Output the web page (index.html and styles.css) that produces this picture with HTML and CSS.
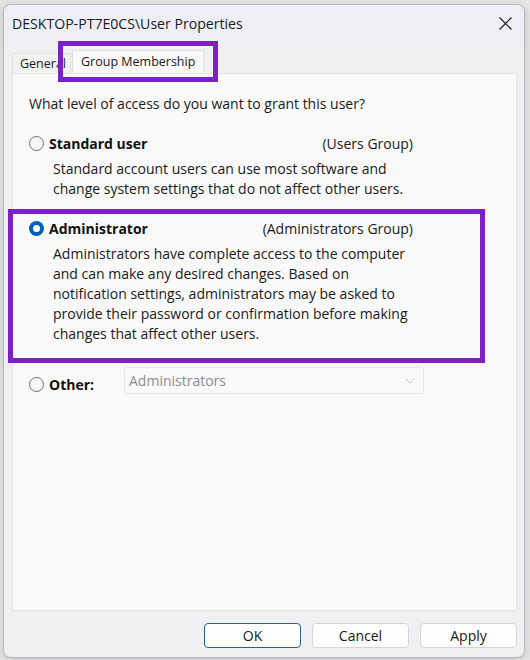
FILE: index.html
```html
<!DOCTYPE html>
<html lang="en">
<head>
<meta charset="utf-8">
<title>User Properties</title>
<link rel="stylesheet" href="styles.css">
</head>
<body>
<div class="window">
  <div class="titlebar">
    <span class="title">DESKTOP-PT7E0CS\User Properties</span>
    <span class="close">
      <svg width="13" height="13" viewBox="0 0 13 13"><path d="M0.5 0.5 L12.5 12.5 M12.5 0.5 L0.5 12.5" stroke="#1b1b1b" stroke-width="1.2" fill="none"/></svg>
    </span>
  </div>
  <div class="tabs">
    <div class="tab">General</div>
    <div class="tab active">Group Membership</div>
  </div>
  <div class="panel">
    <p class="question">What level of access do you want to grant this user?</p>
    <div class="option">
      <div class="option-head">
        <span class="radio"></span>
        <span class="option-name">Standard user</span>
        <span class="group">(Users Group)</span>
      </div>
      <p class="desc">Standard account users can use most software and<br>change system settings that do not affect other users.</p>
    </div>
    <div class="option admin">
      <div class="option-head">
        <span class="radio checked"></span>
        <span class="option-name">Administrator</span>
        <span class="group">(Administrators Group)</span>
      </div>
      <p class="desc">Administrators have complete access to the computer<br>and can make any desired changes. Based on<br>notification settings, administrators may be asked to<br>provide their password or confirmation before making<br>changes that affect other users.</p>
      <div class="mark mark-admin"></div>
    </div>
    <div class="other">
      <span class="radio"></span>
      <span class="option-name other-label">Other:</span>
      <div class="select">
        <span>Administrators</span>
        <svg width="10" height="6" viewBox="0 0 10 6"><path d="M0.5 0.5 L5 5 L9.5 0.5" stroke="#c4c4c4" stroke-width="1" fill="none"/></svg>
      </div>
    </div>
  </div>
  <div class="footer">
    <button class="btn default">OK</button>
    <button class="btn">Cancel</button>
    <button class="btn">Apply</button>
  </div>
  <div class="mark mark-tab"></div>
</div>
</body>
</html>
```
FILE: styles.css
```css
* { box-sizing: border-box; }

html, body {
  margin: 0;
  height: 100%;
}

body {
  background: #e6e6e6;
  padding: 4px 0 0 3px;
  font-family: "Open Sans", "Noto Sans", sans-serif;
  color: #1a1a1a;
  overflow: hidden;
}

.window {
  position: relative;
  width: 522px;
  height: 654px;
  background: #f0f0f3;
  border: 1px solid #b9b9bd;
  border-radius: 8px;
  box-shadow: 0 2px 8px rgba(0,0,0,0.18);
  display: flex;
  flex-direction: column;
}

.titlebar {
  height: 36px;
  display: flex;
  align-items: center;
  justify-content: space-between;
  padding: 0 12px 0 8px;
  background: #eeeff5;
  border-radius: 8px 8px 0 0;
}

.title {
  font-size: 14.1px;
  color: #1a1a1a;
}

.close {
  display: flex;
  width: 13px;
  height: 13px;
}

.tabs {
  display: flex;
  align-items: flex-end;
  height: 32px;
  padding: 0 0 0 8px;
}

.tab {
  font-size: 12.5px;
  height: 20px;
  line-height: 19px;
  padding: 0 4px 0 7px;
  background: #f2f2f2;
  border: 1px solid #e2e2e2;
  border-bottom: none;
  color: #1a1a1a;
}

.tab.active {
  height: 23px;
  line-height: 22px;
  padding: 0 8px;
  background: #f9f9f9;
  margin-left: 1px;
}

.panel {
  height: 538px;
  margin: 0 7px 0 8px;
  background: #f9f9f9;
  border: 1px solid #e4e4e4;
  padding: 20px 0 0 16px;
  font-size: 14px;
}

.question {
  margin: 0;
  line-height: 20px;
}

.option {
  position: relative;
  width: 384px;
  margin-top: 19px;
}

.option.admin {
  margin-top: 19px;
}

.option-head {
  display: flex;
  align-items: center;
  height: 20px;
}

.radio {
  width: 15px;
  height: 15px;
  border-radius: 50%;
  border: 1px solid #6f6f6f;
  background: #f6f6f6;
  flex: none;
}

.radio.checked {
  border: none;
  background: #005fb8;
  position: relative;
}

.radio.checked::after {
  content: "";
  position: absolute;
  left: 4px;
  top: 4px;
  width: 7px;
  height: 7px;
  border-radius: 50%;
  background: #ffffff;
}

.option-name {
  font-weight: 700;
  margin-left: 5px;
  color: #111;
}

.group {
  margin-left: auto;
  color: #1a1a1a;
}

.desc {
  margin: 6px 0 0 24px;
  line-height: 20px;
  white-space: nowrap;
}

.other {
  display: flex;
  align-items: center;
  margin-top: 30px;
}

.other-label {
  width: 75px;
}

.select {
  width: 300px;
  height: 27px;
  margin-top: -7px;
  display: flex;
  align-items: center;
  justify-content: space-between;
  padding: 0 8px 0 4px;
  background: #fafafa;
  border: 1px solid #e6e6e6;
  border-radius: 3px;
  color: #8c8c8c;
}

.footer {
  display: flex;
  justify-content: flex-end;
  gap: 11px;
  padding: 12px 7px 0 0;
}

.btn {
  width: 97px;
  height: 25px;
  font-family: inherit;
  font-size: 14px;
  color: #1a1a1a;
  background: #fdfdfd;
  border: 1px solid #d5d5d5;
  border-radius: 4px;
  padding: 0;
}

.btn.default {
  border-color: #2d5f86;
}

.mark {
  position: absolute;
  border: 5px solid #7c21c4;
  pointer-events: none;
}

.mark-tab {
  left: 54px;
  top: 36px;
  width: 160px;
  height: 41px;
}

.mark-admin {
  left: -21px;
  top: -9px;
  width: 477px;
  height: 154px;
}
```
